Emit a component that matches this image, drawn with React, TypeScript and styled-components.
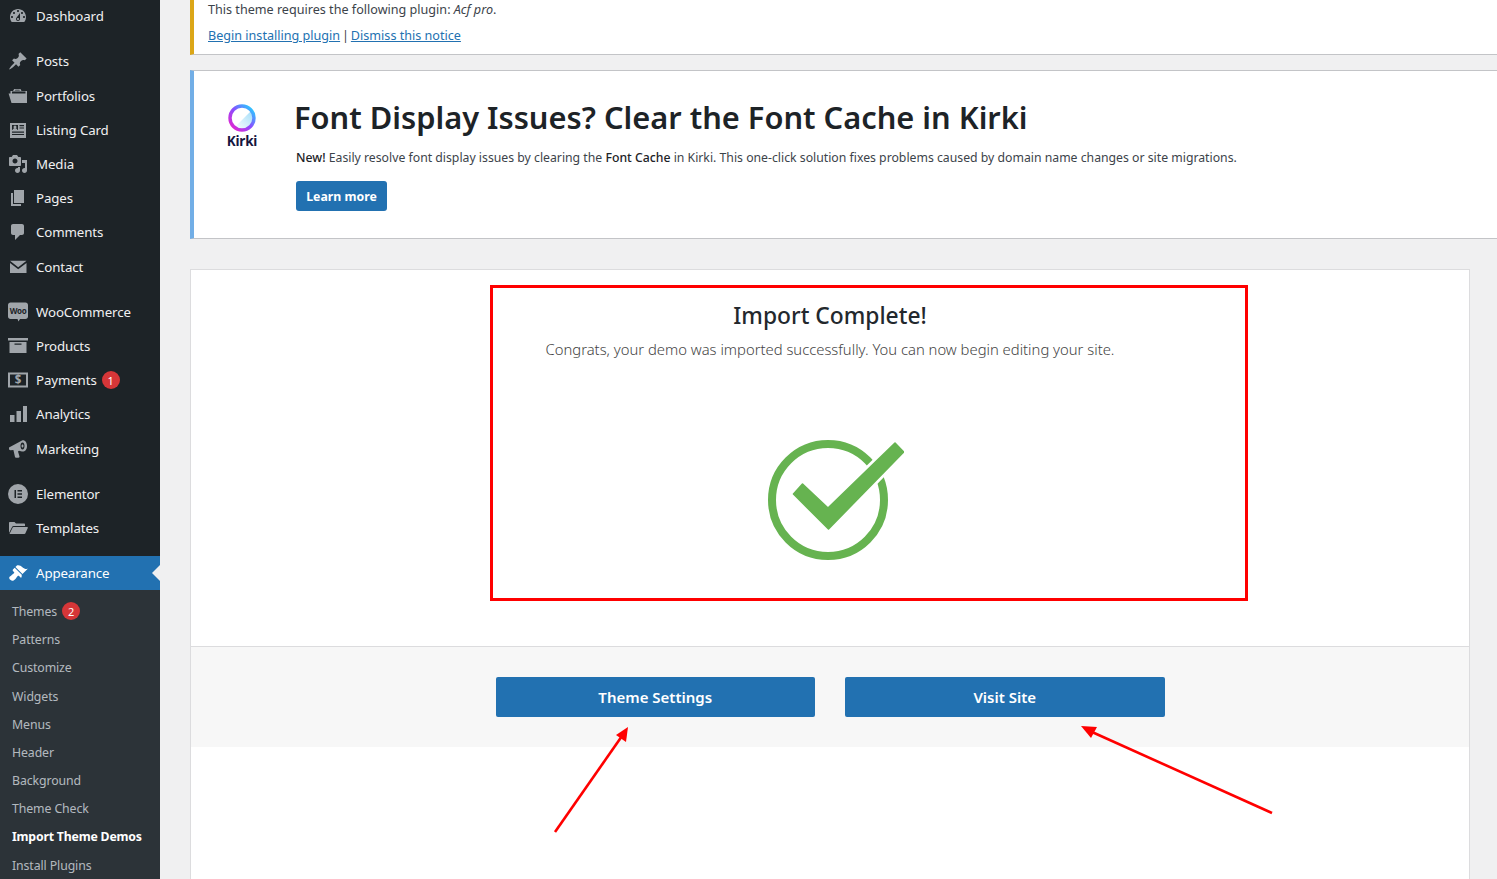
import React from "react";
import styled, { createGlobalStyle } from "styled-components";

const Global = createGlobalStyle`
  html, body { margin: 0; padding: 0; height: 100%; overflow: hidden; background: #f0f0f1; }
  body { font-family: "Noto Sans", "Open Sans", "Liberation Sans", sans-serif; font-size: 13px; color: #3c434a; }
`;

const Shell = styled.div`
  position: relative;
  display: flex;
  width: 1497px;
  height: 879px;
  overflow: hidden;
`;
const Sidebar = styled.nav`
  width: 160px;
  flex: none;
  background: #1d2327;
  padding-top: 0;
  margin-top: -1px;
`;
const MenuRow = styled.div<{ $active?: boolean }>`
  position: relative;
  display: flex;
  align-items: center;
  height: 34.2px;
  color: ${p => (p.$active ? "#fff" : "#f0f0f1")};
  background: ${p => (p.$active ? "#2271b1" : "transparent")};
  ${p =>
    p.$active
      ? `&::after { content: ""; position: absolute; right: 0; top: 50%; margin-top: -8px; border: 8px solid transparent; border-right-color: #f0f0f1; }`
      : ""}
`;
const IconSlot = styled.span<{ $active?: boolean }>`
  width: 36px;
  flex: none;
  display: flex;
  justify-content: center;
  color: ${p => (p.$active ? "#fff" : "#a0a5aa")};
  svg { display: block; width: 20px; height: 20px; fill: currentColor; }
`;
const MenuLabel = styled.span`
  font-size: 13.3px;
  letter-spacing: -0.12px;
  white-space: nowrap;
`;
const Separator = styled.div`
  height: 11.1px;
`;
const Badge = styled.span`
  display: inline-flex;
  align-items: center;
  justify-content: center;
  width: 18px;
  height: 18px;
  margin-left: 5px;
  border-radius: 50%;
  background: #d63638;
  color: #fff;
  font-size: 11px;
  font-weight: 400;
`;
const SubMenu = styled.div`
  background: #2c3338;
  padding-top: 7px;
  padding-bottom: 10px;
`;
const SubRow = styled.div<{ $current?: boolean }>`
  display: flex;
  align-items: center;
  height: 28.2px;
  padding-left: 12px;
  font-size: 12.3px;
  letter-spacing: ${p => (p.$current ? "-0.2px" : "-0.1px")};
  white-space: nowrap;
  font-weight: ${p => (p.$current ? 700 : 400)};
  color: ${p => (p.$current ? "#fff" : "rgba(240,246,252,.7)")};
`;

const Main = styled.main`
  flex: 1;
  min-width: 0;
  display: flex;
  flex-direction: column;
  padding-left: 30px;
`;
const PluginNotice = styled.div`
  flex: none;
  height: 55px;
  box-sizing: border-box;
  background: #fff;
  border-left: 4px solid #dba617;
  border-bottom: 1px solid #c3c4c7;
  padding-left: 14px;
  margin-bottom: 15px;
`;
const NoticeLine = styled.p`
  margin: 0;
  height: 26px;
  line-height: 19px;
  font-size: 12.6px;
  a { color: #2271b1; text-decoration: underline; }
`;
const Pipe = styled.span`
  margin: 0 -1.4px;
`;
const KirkiNotice = styled.section`
  flex: none;
  height: 169px;
  box-sizing: border-box;
  display: flex;
  background: #fff;
  border-left: 4px solid #72aee6;
  border-top: 1px solid #c3c4c7;
  border-bottom: 1px solid #c3c4c7;
  margin-bottom: 30px;
`;
const LogoCol = styled.div`
  width: 102px;
  flex: none;
  display: flex;
  flex-direction: column;
  align-items: center;
  padding: 32px 6px 0 0;
  box-sizing: border-box;
  svg { display: block; }
`;
const LogoText = styled.span`
  margin-top: 0;
  font-size: 13.5px;
  line-height: 16px;
  font-weight: 700;
  letter-spacing: -0.2px;
  color: #16163f;
`;
const KirkiBody = styled.div`
  flex: 1;
  padding-top: 24px;
`;
const KirkiHeading = styled.h2`
  margin: 0 0 0 -2px;
  font-size: 30.8px;
  line-height: 44px;
  font-weight: 600;
  color: #1d2327;
  white-space: nowrap;
`;
const KirkiText = styled.p`
  margin: 10px 0 0;
  font-size: 12.25px;
  line-height: 18px;
  white-space: nowrap;
  strong { font-weight: 500; color: #1d2327; }
`;
const LearnButton = styled.a`
  display: flex;
  align-items: center;
  justify-content: center;
  width: 91px;
  height: 30px;
  margin-top: 14px;
  background: #2271b1;
  border-radius: 3px;
  color: #fff;
  font-size: 12.3px;
  font-weight: 700;
`;
const Card = styled.section`
  flex: 1;
  margin-right: 27px;
  margin-bottom: -40px;
  background: #fff;
  border: 1px solid #dcdcde;
  display: flex;
  flex-direction: column;
`;
const CardBody = styled.div`
  height: 376px;
  flex: none;
  display: flex;
  flex-direction: column;
  align-items: center;
  padding-top: 28px;
  box-sizing: border-box;
`;
const CardTitle = styled.h3`
  margin: 0;
  font-size: 22.8px;
  line-height: 36px;
  font-weight: 500;
  color: #23282d;
`;
const CardText = styled.p`
  margin: 3px 0 0;
  font-size: 14.8px;
  line-height: 24px;
  font-weight: 300;
  color: #444;
  white-space: nowrap;
`;
const CheckMark = styled.svg`
  display: block;
  margin-top: 74px;
  flex: none;
`;
const CardFooter = styled.div`
  flex: none;
  height: 101px;
  box-sizing: border-box;
  background: #f7f7f7;
  border-top: 1px solid #dcdcde;
  padding-top: 30px;
  display: flex;
  justify-content: center;
  align-items: flex-start;
  gap: 30px;
`;
const FooterButton = styled.a`
  width: 319.5px;
  height: 40px;
  display: flex;
  align-items: center;
  justify-content: center;
  background: #2271b1;
  border-radius: 2px;
  color: #fff;
  font-size: 15px;
  font-weight: 600;
`;
const RedFrame = styled.div`
  position: absolute;
  left: 490px;
  top: 285px;
  width: 758px;
  height: 316px;
  box-sizing: border-box;
  border: 3px solid #f00;
  pointer-events: none;
`;
const Arrows = styled.svg`
  position: absolute;
  left: 0;
  top: 0;
  pointer-events: none;
`;

const Ic: Record<string, React.ReactNode> = {
  dashboard: <path fillRule="evenodd" d="M3.76 16h12.48c1.1-1.37 1.76-3.11 1.76-5 0-4.42-3.58-8-8-8s-8 3.58-8 8c0 1.89.66 3.63 1.76 5zM10 4c.55 0 1 .45 1 1s-.45 1-1 1-1-.45-1-1 .45-1 1-1zM6 6c.55 0 1 .45 1 1s-.45 1-1 1-1-.45-1-1 .45-1 1-1zm8 0c.55 0 1 .45 1 1s-.45 1-1 1-1-.45-1-1 .45-1 1-1zm-5.37 5.55L12 7v6c0 1.1-.9 2-2 2s-2-.9-2-2c0-.57.24-1.08.63-1.45zM4 10c.55 0 1 .45 1 1s-.45 1-1 1-1-.45-1-1 .45-1 1-1zm12 0c.55 0 1 .45 1 1s-.45 1-1 1-1-.45-1-1 .45-1 1-1zm-5 3c0-.55-.45-1-1-1s-1 .45-1 1 .45 1 1 1 1-.45 1-1z" />,
  post: <path d="M10.44 3.02l1.82-1.82 6.36 6.35-1.83 1.82c-1.05-.68-2.48-.57-3.41.36l-.75.75c-.92.93-1.04 2.35-.35 3.41l-1.83 1.82-2.41-2.41-2.8 2.79c-.42.42-3.38 2.71-3.8 2.29s1.86-3.39 2.28-3.81l2.79-2.79L4.1 9.36l1.83-1.82c1.05.69 2.48.57 3.4-.36l.75-.75c.93-.92 1.05-2.35.36-3.41z" />,
  portfolio: <path fillRule="evenodd" d="M5 5l1.200-2h6.300L13.500 5H19v12H3.500L.6 7.500h1.900V5H5zM4 5.500V7.500h13.500V5.500H4zM7 4.500h4.800l-.3-.7H7.400L7 4.500z" />,
  card: <path fillRule="evenodd" d="M2 3h16v15H2V3zm2 2v5h6V5H4zm7.500 0v1.200H16V5h-4.500zm0 2.400v1.200H16V7.400h-4.500zM4 11.500v1.200h12v-1.200H4zm0 2.400v1.200h12v-1.200H4zM7 5.600a1.500 1.500 0 1 1 0 3 1.500 1.500 0 0 1 0-3zM4.600 10c0-1.200 1-1.600 2.400-1.600s2.400.4 2.400 1.600H4.600z" />,
  media: <path fillRule="evenodd" d="M13 11V4c0-.55-.45-1-1-1h-1.670L9 1H5L3.670 3H2c-.55 0-1 .45-1 1v7c0 .55.45 1 1 1h10c.55 0 1-.45 1-1zM7 4.500c1.380 0 2.500 1.120 2.500 2.500S8.380 9.500 7 9.500 4.500 8.380 4.500 7 5.620 4.500 7 4.500zM14 6h5v10.500c0 1.380-1.120 2.500-2.500 2.500S14 17.880 14 16.500s1.120-2.500 2.500-2.500c.17 0 .34.02.5.05V9h-3V6zm-4 8.050V13h2v3.500c0 1.380-1.120 2.500-2.500 2.500S7 17.880 7 16.500 8.120 14 9.500 14c.17 0 .34.02.5.05z" />,
  page: <path d="M6 15V2h10v13H6zm-1 1h8v2H3V5h2v11z" />,
  comments: <path d="M5 2h9c1.100 0 2 .9 2 2v7c0 1.100-.9 2-2 2h-2l-5 5v-5H5c-1.100 0-2-.9-2-2V4c0-1.100.9-2 2-2z" />,
  email: <path d="M2 3.800h16.500L10.200 10.200 2 3.800zM2 6l8.200 6.300L18.500 6v10H2V6z" />,
  woo: (
    <>
      <path d="M2.500 .5h15C18.900 .5 20 1.600 20 3v11.500c0 1.400-1.100 2.500-2.500 2.500H12l-1.500 2.500-1-2.500h-7C1.100 17 0 15.900 0 14.500V3C0 1.600 1.100 .5 2.500 .5z" />
      <text x="10" y="11.800" textAnchor="middle" fontSize="8" fontWeight="700" letterSpacing="-0.3" fill="#1d2327" fontFamily="Noto Sans, sans-serif">Woo</text>
    </>
  ),
  products: <path d="M0 2h20v2.500H0V2zm1.500 4h17v11h-17V6zm5 1.500v1.200h7V7.500h-7z" fillRule="evenodd" />,
  payments: (
    <>
      <path fillRule="evenodd" d="M0 2.500h20v15H0V2.500zm2 2v11h16v-11H2z" />
      <text x="10" y="14.300" textAnchor="middle" fontSize="11.500" fontWeight="700" fontFamily="Noto Sans, sans-serif">$</text>
    </>
  ),
  analytics: <path d="M2 11h4.500v7H2v-7zm6.500-4H13v11H8.500V7zM15 2h4v16h-4V2z" />,
  marketing: <path fillRule="evenodd" d="M1 8.500 14 1.500c2.500-1 5 1.500 5 5.500s-2.500 6-5 5.500l-3-.8-1 .8 1.500 5c.2.700-.3 1.200-1 1.200H8c-.500 0-.9-.3-1-.8L5.400 11l-3 .2C1.500 11.200 1 10.800 1 10V8.500zM14.500 3.500c-1.300 0-2 1.600-2 3.500s.7 3.500 2 3.500 2-1.600 2-3.500-.7-3.500-2-3.500zm0 2c.6 0 1 .7 1 1.500s-.4 1.500-1 1.500-1-.7-1-1.500.4-1.500 1-1.500z" />,
  elementor: <path fillRule="evenodd" d="M10 0a10 10 0 1 1 0 20 10 10 0 0 1 0-20zM6.500 6v8H8V6H6.500zm3 0v1.500h4.500V6H9.500zm0 3.200v1.500h4.500V9.200H9.500zm0 3.300V14h4.500v-1.500H9.500z" />,
  templates: <path d="M1 15V5c0-.6.4-1 1-1h4.500L8 5.500h8c.6 0 1 .4 1 1V8H5.500c-.6 0-1 .3-1.300.8L1 15zm4.500-6H19c.6 0 1 .5.8 1l-2.500 5.500c-.2.300-.5.500-.8.500H1.500l3.200-6.500c.2-.300.500-.500.800-.500z" />,
  appearance: <path d="M14.480 11.060L7.410 3.990l1.500-1.500c.5-.56 2.300-.47 3.510.32 1.210.8 1.430 1.280 2.910 2.100 1.180.64 2.450 1.260 4.450.85zm-.71.71L6.700 4.700 4.930 6.470c-.39.39-.39 1.020 0 1.410l1.060 1.060c.39.39.39 1.030 0 1.420-.6.6-1.430 1.110-2.210 1.690-.35.26-.7.53-1.010.84C1.430 13.230.4 14.890 2.300 16.800c1.910 1.910 3.570.87 4.900-.46.3-.31.58-.66.84-1.010.58-.78 1.090-1.610 1.690-2.210.39-.39 1.020-.39 1.410 0l1.060 1.060c.39.39 1.020.39 1.410 0z" />,
};

type Item = { icon: string; label: string; badge?: string } | "sep";
const menu: Item[] = [
  { icon: "dashboard", label: "Dashboard" },
  "sep",
  { icon: "post", label: "Posts" },
  { icon: "portfolio", label: "Portfolios" },
  { icon: "card", label: "Listing Card" },
  { icon: "media", label: "Media" },
  { icon: "page", label: "Pages" },
  { icon: "comments", label: "Comments" },
  { icon: "email", label: "Contact" },
  "sep",
  { icon: "woo", label: "WooCommerce" },
  { icon: "products", label: "Products" },
  { icon: "payments", label: "Payments", badge: "1" },
  { icon: "analytics", label: "Analytics" },
  { icon: "marketing", label: "Marketing" },
  "sep",
  { icon: "elementor", label: "Elementor" },
  { icon: "templates", label: "Templates" },
  "sep",
];
const subItems = ["Themes", "Patterns", "Customize", "Widgets", "Menus", "Header", "Background", "Theme Check", "Import Theme Demos", "Install Plugins"];

export default function App() {
  return (
    <Shell>
      <Global />
      <Sidebar>
        {menu.map((m, i) =>
          m === "sep" ? (
            <Separator key={i} />
          ) : (
            <MenuRow key={i}>
              <IconSlot><svg viewBox="0 0 20 20">{Ic[m.icon]}</svg></IconSlot>
              <MenuLabel>{m.label}</MenuLabel>
              {m.badge && <Badge>{m.badge}</Badge>}
            </MenuRow>
          )
        )}
        <MenuRow $active>
          <IconSlot $active><svg viewBox="0 0 20 20">{Ic.appearance}</svg></IconSlot>
          <MenuLabel>Appearance</MenuLabel>
        </MenuRow>
        <SubMenu>
          {subItems.map(s => (
            <SubRow key={s} $current={s === "Import Theme Demos"}>
              {s}
              {s === "Themes" && <Badge>2</Badge>}
            </SubRow>
          ))}
        </SubMenu>
      </Sidebar>
      <Main>
        <PluginNotice>
          <NoticeLine>This theme requires the following plugin: <em>Acf pro</em>.</NoticeLine>
          <NoticeLine><a>Begin installing plugin</a> <Pipe>|</Pipe> <a>Dismiss this notice</a></NoticeLine>
        </PluginNotice>
        <KirkiNotice>
          <LogoCol>
            <svg width="30" height="30" viewBox="0 0 30 30">
              <defs>
                <linearGradient id="kirkiRing" x1="0" y1="1" x2="1" y2="0">
                  <stop offset="0" stopColor="#f01fc8" />
                  <stop offset="0.5" stopColor="#8a4dff" />
                  <stop offset="1" stopColor="#19e0ff" />
                </linearGradient>
                <linearGradient id="kirkiFill" x1="0" y1="1" x2="1" y2="0">
                  <stop offset="0" stopColor="#fff" />
                  <stop offset="1" stopColor="#9fdcf8" />
                </linearGradient>
              </defs>
              <path d="M24 8 L8 24 A11 11 0 0 0 24 8 Z" fill="url(#kirkiFill)" />
              <circle cx="15" cy="15" r="12" fill="none" stroke="url(#kirkiRing)" strokeWidth="3.4" />
            </svg>
            <LogoText>Kirki</LogoText>
          </LogoCol>
          <KirkiBody>
            <KirkiHeading>Font Display Issues? Clear the Font Cache in Kirki</KirkiHeading>
            <KirkiText>
              <strong>New!</strong> Easily resolve font display issues by clearing the <strong>Font Cache</strong> in Kirki. This one-click solution fixes problems caused by domain name changes or site migrations.
            </KirkiText>
            <LearnButton>Learn more</LearnButton>
          </KirkiBody>
        </KirkiNotice>
        <Card>
          <CardBody>
            <CardTitle>Import Complete!</CardTitle>
            <CardText>Congrats, your demo was imported successfully. You can now begin editing your site.</CardText>
            <CheckMark width="148" height="130" viewBox="0 0 148 130">
              <circle cx="72" cy="65" r="56" fill="none" stroke="#66b350" strokeWidth="8" />
              <path d="M139 8 L147.500 17 L72.500 94 L37.500 59 L46.500 49 L72 73 Z" fill="#66b350" stroke="#fff" strokeWidth="7" strokeLinejoin="round" />
              <path d="M139 8 L147.500 17 L72.500 94 L37.500 59 L46.500 49 L72 73 Z" fill="#66b350" stroke="#66b350" strokeWidth="1.600" strokeLinejoin="round" />
            </CheckMark>
          </CardBody>
          <CardFooter>
            <FooterButton>Theme Settings</FooterButton>
            <FooterButton>Visit Site</FooterButton>
          </CardFooter>
        </Card>
      </Main>
      <RedFrame />
      <Arrows width="1497" height="879" viewBox="0 0 1497 879">
        <line x1="555" y1="832" x2="622" y2="736" stroke="#f00" strokeWidth="2.600" />
        <path d="M628 727 L626 742 L616 735 Z" fill="#f00" />
        <line x1="1272" y1="813" x2="1092" y2="732" stroke="#f00" strokeWidth="2.600" />
        <path d="M1081 726 L1097 727 L1091 738 Z" fill="#f00" />
      </Arrows>
    </Shell>
  );
}
